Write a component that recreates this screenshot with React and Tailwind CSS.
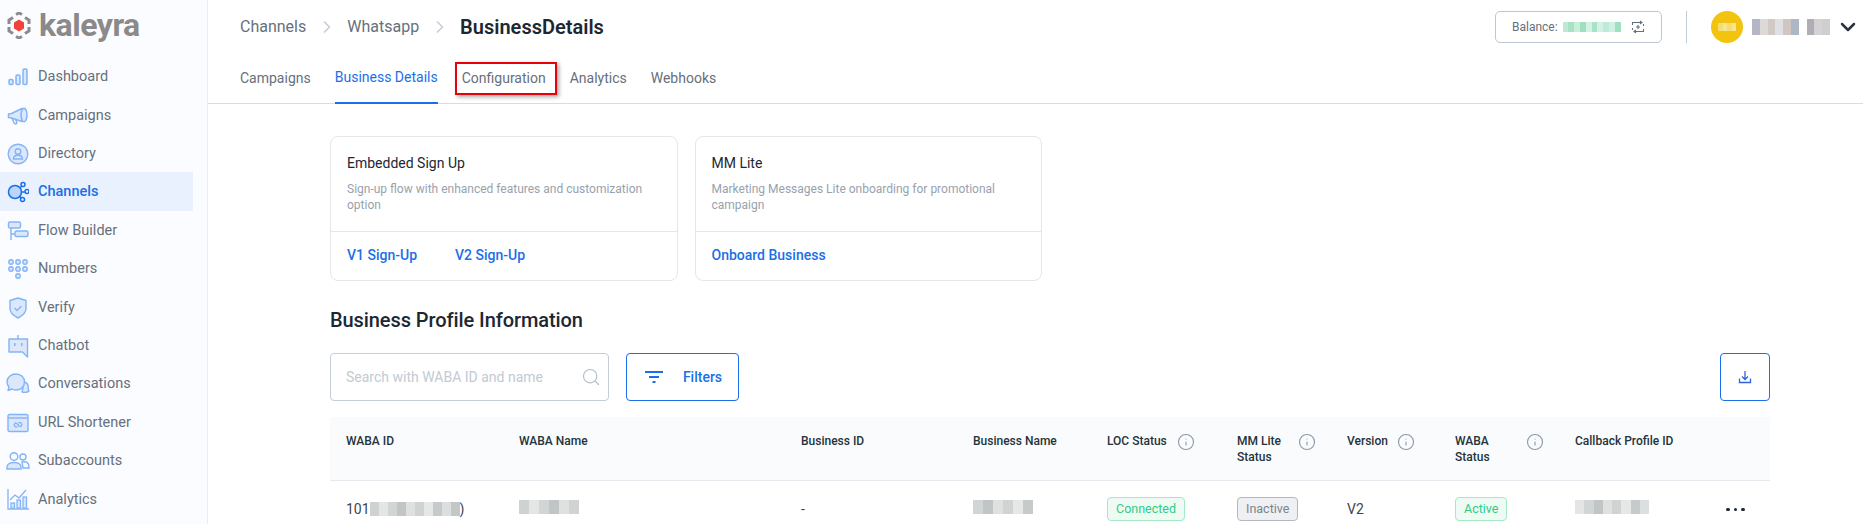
import React from 'react'
import { ChevronRight, ChevronDown, Search, Info } from 'lucide-react'

const S = '#84b4f6'
const F = '#dbe8fc'

function Dashboard() {
  return (
    <svg width="22" height="22" viewBox="0 0 22 22" fill={F} stroke={S} strokeWidth="1.5">
      <rect x="2" y="13.500" width="4" height="5" rx="1.200" />
      <rect x="9" y="9" width="4" height="9.500" rx="1.200" />
      <rect x="16" y="3" width="4" height="15.500" rx="1.200" />
    </svg>
  )
}

function Megaphone() {
  return (
    <svg width="22" height="22" viewBox="0 0 22 22" fill={F} stroke={S} strokeWidth="1.500" strokeLinejoin="round">
      <path d="M1.500 9l3-.5L15 3.500v13L4.500 13l-3-.5z" />
      <ellipse cx="17" cy="10" rx="3" ry="6.800" />
      <path d="M5 13l2 5c.5 1.200 3 1 2.800-.5L8.500 14" fill="none" />
    </svg>
  )
}

function Directory() {
  return (
    <svg width="22" height="22" viewBox="0 0 22 22" fill={F} stroke={S} strokeWidth="1.400">
      <circle cx="11" cy="11" r="9.800" />
      <circle cx="11" cy="8.500" r="2.800" fill="none" />
      <path d="M6.500 16c0-5 9-5 9 0z" fill="none" />
    </svg>
  )
}

function Channels() {
  return (
    <svg width="22" height="22" viewBox="0 0 22 22" fill="#bcd6fb" stroke="#1b6fe8" strokeWidth="1.500">
      <circle cx="8" cy="11" r="6.500" />
      <circle cx="16" cy="3.500" r="2" fill="none" />
      <circle cx="20" cy="10.500" r="2" fill="none" />
      <circle cx="15.500" cy="18.500" r="2" fill="none" />
      <path d="M13 7l2-2M14.500 11H18M12.500 15.500l2 1.300" fill="none" />
    </svg>
  )
}

function Flow() {
  return (
    <svg width="22" height="22" viewBox="0 0 22 22" fill={F} stroke={S} strokeWidth="1.400">
      <rect x="1.500" y="2" width="12" height="6" rx="1.500" />
      <rect x="8" y="11" width="13" height="5.500" rx="1.500" />
      <path d="M4 8v12M4 14h4" fill="none" />
    </svg>
  )
}

function Numbers() {
  const dots = [[4, 4], [11, 4], [18, 4], [4, 11], [11, 11], [18, 11], [11, 18]]
  return (
    <svg width="22" height="22" viewBox="0 0 22 22" fill={F} stroke={S} strokeWidth="1.400">
      {dots.map(([x, y]) => (
        <circle key={`${x}-${y}`} cx={x} cy={y} r="2.200" />
      ))}
    </svg>
  )
}

function Verify() {
  return (
    <svg width="22" height="22" viewBox="0 0 22 22" fill={F} stroke={S} strokeWidth="1.400" strokeLinejoin="round">
      <path d="M11 1l8 2.500v8c0 4.500-4 7.500-8 9.500-4-2-8-5-8-9.500v-8z" />
      <path d="M7.500 11l2.500 2.500 4.500-4.500" fill="none" />
    </svg>
  )
}

function Chatbot() {
  return (
    <svg width="22" height="24" viewBox="0 0 22 24" fill={F} stroke={S} strokeWidth="1.400" strokeLinejoin="round">
      <path d="M2 5h18.500v18l-5-5H2z" />
      <path d="M11 5V1" fill="none" />
      <rect x="7" y="9" width="1.500" height="3" fill={S} stroke="none" />
      <rect x="14" y="9" width="1.500" height="3" fill={S} stroke="none" />
    </svg>
  )
}

function Conversations() {
  return (
    <svg width="24" height="22" viewBox="0 0 24 22" fill={F} stroke={S} strokeWidth="1.400" strokeLinejoin="round">
      <path d="M16 19c5 1 7-1 7-1-1-1-.8-2-.8-4 0-3-2-4.500-4-5z" />
      <path d="M10 1c5 0 8.500 3.500 8.500 8s-3.500 8-8.500 8c-1.500 0-3-.3-4-1l-4 1.500 1-3.500C1.800 12.500 1 11 1 9c0-4.500 4-8 9-8z" />
    </svg>
  )
}

function UrlIcon() {
  return (
    <svg width="22" height="20" viewBox="0 0 22 20" fill={F} stroke={S} strokeWidth="1.400">
      <rect x="1" y="1.500" width="20" height="17" rx="1.500" />
      <path d="M1 5h20" fill="none" />
      <path d="M9 9.500l-1.500 1.500a2 2 0 0 0 3 2.500M13 14l1.500-1.500a2 2 0 0 0-3-2.500M9.500 10l3 3.500" fill="none" />
    </svg>
  )
}

function Subaccounts() {
  return (
    <svg width="24" height="20" viewBox="0 0 24 20" fill={F} stroke={S} strokeWidth="1.400">
      <path d="M16 11c4-1 7 .5 7 4.500v1.500h-6z" fill="none" />
      <circle cx="17" cy="6" r="3" fill="none" />
      <circle cx="8" cy="5.500" r="3.800" fill="none" />
      <path d="M1 18v-2c0-6 14-6 14 0v2z" />
    </svg>
  )
}

function AnalyticsIcon() {
  return (
    <svg width="22" height="22" viewBox="0 0 22 22" fill={F} stroke={S} strokeWidth="1.300">
      <path d="M1 1v20h21" fill="none" />
      <rect x="4" y="15" width="3.500" height="5" />
      <rect x="10" y="12" width="3.500" height="8" />
      <rect x="16" y="9" width="3.500" height="11" />
      <path d="M3 12l5-5 4 3 7-8" fill="none" />
    </svg>
  )
}

const navItems = [
  { label: 'Dashboard', icon: Dashboard },
  { label: 'Campaigns', icon: Megaphone },
  { label: 'Directory', icon: Directory },
  { label: 'Channels', icon: Channels, active: true },
  { label: 'Flow Builder', icon: Flow },
  { label: 'Numbers', icon: Numbers },
  { label: 'Verify', icon: Verify },
  { label: 'Chatbot', icon: Chatbot },
  { label: 'Conversations', icon: Conversations },
  { label: 'URL Shortener', icon: UrlIcon },
  { label: 'Subaccounts', icon: Subaccounts },
  { label: 'Analytics', icon: AnalyticsIcon },
]

// stand-in for the pixelated, redacted values
function Mosaic({ colors, className }) {
  return (
    <span className={`inline-flex blur-[0.7px] ${className}`}>
      {colors.map((c, i) => (
        <span key={i} className={`h-full flex-1 ${c}`} />
      ))}
    </span>
  )
}

const GREY = ['bg-[#cfd2d3]', 'bg-[#e4e6e6]', 'bg-[#d2d5d6]', 'bg-[#c1c5c6]', 'bg-[#dfe1e1]', 'bg-[#cfd3d3]', 'bg-[#e6e8e8]', 'bg-[#c6cacb]', 'bg-[#dcdfdf]', 'bg-[#c3c7c8]']
const MINT = ['bg-[#bfe9d4]', 'bg-[#a8e2c5]', 'bg-[#c8efdc]', 'bg-[#9fdfbf]', 'bg-[#d4f2e4]', 'bg-[#a9e3c7]', 'bg-[#d4f2e4]', 'bg-[#bdeada]', 'bg-[#cdf1e2]', 'bg-[#a0e0c2]']
const NAME = ['bg-[#b3b6c4]', 'bg-[#dcd9da]', 'bg-[#d3c9c4]', 'bg-[#dfe0e4]', 'bg-[#cfc6c2]', 'bg-[#aeb7c6]', 'bg-[#ffffff]', 'bg-[#b0aeb4]', 'bg-[#d4d2d4]', 'bg-[#cfcfd2]']

function TopBar() {
  return (
    <div className="flex h-[53px] items-center justify-between pl-[32px] pr-[3px]">
      <div className="flex items-center text-[16px] text-[#66707c]">
        <span>Channels</span>
        <ChevronRight className="mx-[10.500px] text-[#c5ced8]" size={20} />
        <span>Whatsapp</span>
        <ChevronRight className="mx-[10.500px] text-[#c5ced8]" size={20} />
        <span className="text-[20px] font-semibold text-[#1d2733]">BusinessDetails</span>
      </div>
      <div className="flex items-center">
        <div className="flex h-[32px] w-[167px] items-center rounded-[5px] border border-[#bcc6d2] pl-[16px] text-[12px] text-[#66707c]">
          <span>Balance:</span>
          <Mosaic colors={MINT} className="ml-[5px] h-[10px] w-[58px]" />
          <svg className="ml-[10px]" width="14" height="14" viewBox="0 0 14 14" fill="none" stroke="#66707c" strokeWidth="1.100">
            <path d="M1.500 5V2.500h9M12.500 9v2.500h-9M9 1l2 1.500L9 4M5 10l-2 1.500L5 13M1.500 8v2M12.500 4v2M7 5v4M5 7h4" />
          </svg>
        </div>
        <div className="ml-[24px] h-[32px] w-px bg-[#c2ccd8]" />
        <div className="ml-[24px] flex h-[32px] w-[32px] items-center justify-center rounded-full bg-[#f2c40f]">
          <Mosaic colors={['bg-[#f7dc6f]', 'bg-[#f9e58f]', 'bg-[#f7dc6f]', 'bg-[#f9e58f]']} className="h-[8px] w-[18px]" />
        </div>
        <Mosaic colors={NAME} className="ml-[9px] h-[16px] w-[78px]" />
        <ChevronDown className="ml-[6px] text-[#2b3440]" size={24} strokeWidth={2.500} />
      </div>
    </div>
  )
}

function Tabs() {
  return (
    <div className="flex h-[51px] gap-[24px] border-b border-[#d9dde2] pl-[32px] text-[14px] text-[#66707c]">
      <a className="flex items-center">Campaigns</a>
      <a className="-mb-px flex items-center border-b-2 border-[#1b6fe8] text-[#1b6fe8]">Business Details</a>
      <a className="relative flex items-center">
        Configuration
        <span className="absolute -left-[7px] -right-[11px] top-[9px] h-[33px] border-2 border-[#e8000b] shadow-[2px_2px_4px_rgba(0,0,0,0.35)]" />
      </a>
      <a className="flex items-center">Analytics</a>
      <a className="flex items-center">Webhooks</a>
    </div>
  )
}

function Card({ title, text, links }) {
  return (
    <div className="h-[145px] w-[347.500px] rounded-[8px] border border-[#e4e7ea] bg-white">
      <div className="h-[95px] border-b border-[#e4e7ea] px-[16px] pt-[16px]">
        <div className="text-[14px] leading-[20px] text-[#1d2733]">{title}</div>
        <p className="mt-[8px] text-[12px] leading-[16px] text-[#98a2ae]">{text}</p>
      </div>
      <div className="flex h-[47px] items-center gap-[38px] px-[16px] text-[14px] font-medium text-[#1b6fe8]">
        {links.map((l) => (
          <a key={l}>{l}</a>
        ))}
      </div>
    </div>
  )
}

function HeadCell({ children, info, className = '' }) {
  return (
    <th className="h-[63px] pl-[16px] pt-[16px] align-top text-[12px] font-medium leading-[16px] text-[#25333b]">
      <div className={`flex items-start ${className}`}>
        <span className="block">{children}</span>
        {info && <Info className="text-[#8c99a8]" size={18} strokeWidth={1.500} />}
      </div>
    </th>
  )
}

function Badge({ children, className }) {
  return (
    <span className={`inline-flex h-[24px] items-center rounded-[4px] border px-[8px] text-[12.500px] ${className}`}>
      {children}
    </span>
  )
}

function ProfileTable() {
  const cell = 'h-[58px] pl-[16px] text-[14px] text-[#3d4650]'
  return (
    <table className="w-full table-fixed border-collapse text-left">
      <colgroup>
        <col className="w-[173px]" />
        <col className="w-[282px]" />
        <col className="w-[172px]" />
        <col className="w-[134px]" />
        <col className="w-[130px]" />
        <col className="w-[110px]" />
        <col className="w-[108px]" />
        <col className="w-[120px]" />
        <col className="w-[161px]" />
        <col />
      </colgroup>
      <thead>
        <tr className="border-b border-[#e6e9ed] bg-[#fafbfd]">
          <HeadCell>WABA ID</HeadCell>
          <HeadCell>WABA Name</HeadCell>
          <HeadCell>Business ID</HeadCell>
          <HeadCell>Business Name</HeadCell>
          <HeadCell info className="gap-[10px]">LOC Status</HeadCell>
          <HeadCell info className="justify-between pr-[15px]">MM Lite<br />Status</HeadCell>
          <HeadCell info className="gap-[9px]">Version</HeadCell>
          <HeadCell info className="justify-between pr-[15px]">WABA<br />Status</HeadCell>
          <HeadCell>Callback Profile ID</HeadCell>
          <HeadCell />
        </tr>
      </thead>
      <tbody>
        <tr className="align-middle">
          <td className={cell}>
            <span className="flex items-center">
              101
              <Mosaic colors={GREY} className="h-[14px] w-[90px]" />
              )
            </span>
          </td>
          <td className={cell}><Mosaic colors={GREY.slice(0, 6)} className="h-[14px] w-[60px]" /></td>
          <td className={cell}>-</td>
          <td className={cell}><Mosaic colors={GREY.slice(2, 8)} className="h-[14px] w-[60px]" /></td>
          <td className={cell}><Badge className="border-[#a5e8c4] bg-[#eefbf4] text-[#2fcc85]">Connected</Badge></td>
          <td className={cell}><Badge className="border-[#b4b8bd] bg-[#eff0f3] text-[#7c838c]">Inactive</Badge></td>
          <td className={cell}>V2</td>
          <td className={cell}><Badge className="border-[#a5e8c4] bg-[#eefbf4] text-[#2fcc85]">Active</Badge></td>
          <td className={cell}><Mosaic colors={GREY.slice(1, 9)} className="h-[14px] w-[74px]" /></td>
          <td className="h-[58px] pl-[6px]">
            <span className="flex gap-[4px]">
              <i className="h-[3.500px] w-[3.500px] rounded-full bg-[#1d2733]" />
              <i className="h-[3.500px] w-[3.500px] rounded-full bg-[#1d2733]" />
              <i className="h-[3.500px] w-[3.500px] rounded-full bg-[#1d2733]" />
            </span>
          </td>
        </tr>
      </tbody>
    </table>
  )
}

export default function App() {
  return (
    <div className="flex h-[524px] overflow-hidden bg-white font-['Roboto',sans-serif]">
      <aside className="w-[208px] shrink-0 border-r border-[#e9edf2] bg-[#fbfcff]">
        <div className="flex h-[57px] items-start pl-[7px] pt-[12px]">
          <svg width="24" height="27" viewBox="0 0 24 27" fill="none">
            <path d="M12 7.500l5 3v6l-5 3-5-3v-6z" fill="#f04438" />
            <path d="M9 2.500l3-1.500 3 1.500M18 5.500l4 2.500v4M22 15v4l-4 2.500M15 24.500l-3 1.500-3-1.500M6 21.500L2 19v-4M2 12V8l4-2.500" stroke="#8b8b8b" strokeWidth="3" />
          </svg>
          <span className="ml-[8px] -mt-[6px] text-[32px] font-bold leading-[38px] tracking-[-0.5px] text-[#8a8a8a]">kaleyra</span>
        </div>
        <nav className="pr-[14px]">
          {navItems.map(({ label, icon: Icon, active }) => (
            <div
              key={label}
              className={`flex h-[38.400px] items-center pt-[2px] text-[14.500px] ${active ? 'bg-[#e8f1fd] font-medium text-[#1b6fe8]' : 'text-[#66707c]'}`}
            >
              <span className="mr-[2px] flex w-[36px] shrink-0 items-center justify-center">
                <Icon />
              </span>
              {label}
            </div>
          ))}
        </nav>
      </aside>

      <main className="min-w-0 flex-1">
        <TopBar />
        <Tabs />
        <div className="pl-[122px] pr-[93px] pt-[32px]">
          <div className="flex gap-[17px]">
            <Card
              title="Embedded Sign Up"
              text="Sign-up flow with enhanced features and customization option"
              links={['V1 Sign-Up', 'V2 Sign-Up']}
            />
            <Card
              title="MM Lite"
              text="Marketing Messages Lite onboarding for promotional campaign"
              links={['Onboard Business']}
            />
          </div>

          <h2 className="mt-[25px] text-[20px] font-medium leading-[28px] tracking-[-0.080px] text-[#1d2733]">Business Profile Information</h2>

          <div className="mt-[19px] flex items-stretch">
            <div className="flex h-[48px] w-[279px] items-center justify-between rounded-[4px] border border-[#c5ced8] pl-[15px] pr-[7px] text-[14px] text-[#c2cad3]">
              <span>Search with WABA ID and name</span>
              <Search className="text-[#b3bcc7]" size={20} strokeWidth={1.400} />
            </div>
            <button className="ml-[17px] flex h-[48px] w-[113px] items-center justify-center gap-[20px] rounded-[4px] border border-[#1b6fe8] pl-[2px] text-[14px] font-medium text-[#1b6fe8]">
              <svg width="18" height="12" viewBox="0 0 18 12" fill="none" stroke="#1b6fe8" strokeWidth="1.800">
                <path d="M0 1h18M4 6h10M7.500 11h3" />
              </svg>
              Filters
            </button>
            <button className="ml-auto flex h-[48px] w-[50px] items-center justify-center rounded-[4px] border border-[#1b6fe8]">
              <svg width="14" height="14" viewBox="0 0 14 14" fill="none" stroke="#2f62d9" strokeWidth="1.300">
                <path d="M7 1v8M4 6.500L7 9.500l3-3M1.500 8.500v4h11v-4" />
              </svg>
            </button>
          </div>

          <div className="mt-[16px]">
            <ProfileTable />
          </div>
        </div>
      </main>
    </div>
  )
}
